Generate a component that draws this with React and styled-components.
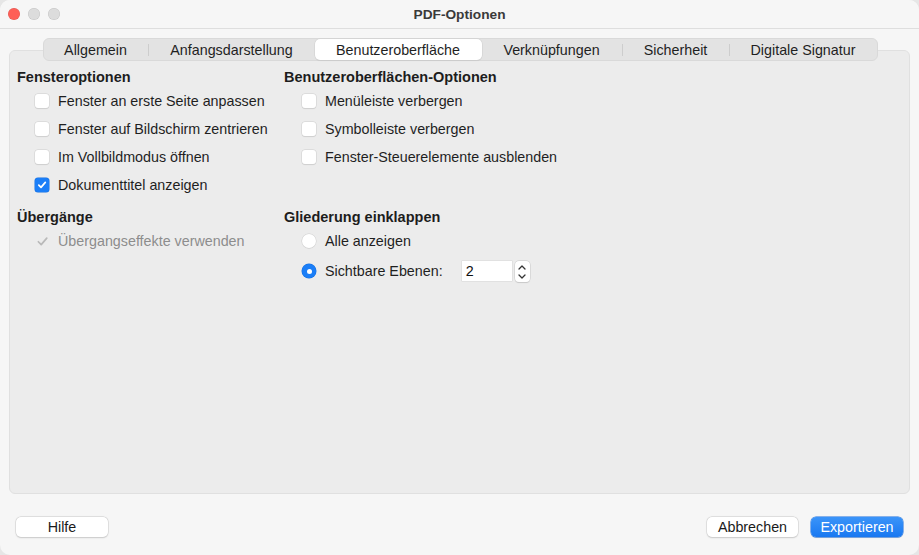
import React from "react";
import styled, { createGlobalStyle } from "styled-components";

const GlobalStyle = createGlobalStyle`
  html, body {
    margin: 0;
    padding: 0;
    background: #e6e6e6;
  }
  body {
    font-family: "Liberation Sans", Arial, Helvetica, sans-serif;
    font-size: 14.3px;
    color: #1d1d1d;
  }
`;

const Window = styled.div`
  display: flex;
  flex-direction: column;
  height: 555px;
  background: #f6f6f6;
  border-radius: 10px;
  overflow: hidden;
`;

const TitleBar = styled.div`
  position: relative;
  display: flex;
  align-items: center;
  justify-content: center;
  height: 28px;
  border-bottom: 1px solid #dedede;
  background: #f6f6f6;
  font-weight: bold;
  font-size: 13.7px;
  color: #3a3a3a;
`;

const Lights = styled.div`
  position: absolute;
  left: 8px;
  top: 8px;
  display: flex;
  gap: 8px;
`;

const Light = styled.span`
  width: 12px;
  height: 12px;
  border-radius: 50%;
  background: ${(p) => p.color};
  box-shadow: inset 0 0 0 0.5px rgba(0, 0, 0, 0.12);
`;

const Body = styled.div`
  flex: 1;
  display: flex;
  flex-direction: column;
  padding: 9px 9px 0 9px;
`;

const TabBar = styled.div`
  position: relative;
  z-index: 1;
  align-self: center;
  display: flex;
  align-items: center;
  height: 21px;
  background: #e3e3e3;
  border: 1px solid #d9d9d9;
  border-radius: 6px;
  margin-left: 1px;
`;

const Tab = styled.div`
  display: flex;
  align-items: center;
  justify-content: center;
  height: 21px;
  width: ${(p) => p.w}px;
  box-sizing: border-box;
  border-radius: 5px;
  background: ${(p) => (p.active ? "#ffffff" : "transparent")};
  box-shadow: ${(p) =>
    p.active ? "0 0 0 0.5px #cfcfcf, 0 1px 1px rgba(0,0,0,0.08)" : "none"};
  color: #1f1f1f;
  white-space: nowrap;
`;

const Sep = styled.span`
  width: 1px;
  height: 12px;
  background: ${(p) => (p.hidden ? "transparent" : "#cdcdcd")};
`;

const Panel = styled.div`
  flex: 1;
  margin-top: -11px;
  background: #ececec;
  border: 1px solid #e0e0e0;
  border-radius: 6px;
  padding: 16px 7px 0 7px;
`;

const Grid = styled.div`
  display: grid;
  grid-template-columns: 267px 1fr;
  row-gap: 8px;
`;

const Section = styled.div`
  display: flex;
  flex-direction: column;
`;

const Heading = styled.div`
  height: 20px;
  line-height: 20px;
  font-weight: bold;
  font-size: 14.5px;
`;

const Row = styled.div`
  display: flex;
  align-items: center;
  height: ${(p) => p.h || 28}px;
  padding-left: 18px;
  gap: 9px;
  color: ${(p) => (p.disabled ? "#8d8d8d" : "#1f1f1f")};
  white-space: nowrap;
`;

const Box = styled.span`
  display: flex;
  align-items: center;
  justify-content: center;
  flex: none;
  width: 14px;
  height: 14px;
  box-sizing: border-box;
  border-radius: ${(p) => (p.round ? "50%" : "3px")};
  background: ${(p) =>
    p.disabled ? "transparent" : p.checked ? "#1b7ef7" : "#ffffff"};
  box-shadow: ${(p) =>
    p.disabled
      ? "none"
      : p.checked
      ? "0 0 0 0.5px #1670e0"
      : "0 0 0 0.5px #cfcfcf, 0 0.5px 1px rgba(0,0,0,0.12)"};
`;

const Dot = styled.span`
  width: 5px;
  height: 5px;
  border-radius: 50%;
  background: #fff;
`;

const Spin = styled.div`
  display: flex;
  align-items: center;
  margin-left: 10px;
  gap: 3px;
`;

const SpinInput = styled.div`
  width: 46px;
  height: 20px;
  line-height: 20px;
  padding-left: 4px;
  background: #fff;
  box-shadow: 0 0 0 0.5px #d6d6d6;
  color: #111;
`;

const Stepper = styled.div`
  display: flex;
  flex-direction: column;
  align-items: center;
  justify-content: space-between;
  box-sizing: border-box;
  padding: 4px 0 3px;
  width: 15px;
  height: 21px;
  border-radius: 4px;
  background: #fff;
  box-shadow: 0 0 0 0.5px #c9c9c9, 0 0.5px 1px rgba(0, 0, 0, 0.15);
`;

const Footer = styled.div`
  display: flex;
  align-items: center;
  padding: 23px 16px 18px 16px;
  gap: 13px;
`;

const Spacer = styled.div`
  flex: 1;
`;

const Button = styled.div`
  display: flex;
  align-items: center;
  justify-content: center;
  width: ${(p) => p.w}px;
  height: 20px;
  border-radius: 5px;
  background: ${(p) =>
    p.primary ? "linear-gradient(#3b94f9, #1978f1)" : "#ffffff"};
  color: ${(p) => (p.primary ? "#ffffff" : "#1a1a1a")};
  box-shadow: ${(p) =>
    p.primary
      ? "0 0 0 0.5px #1a6fe0, 0 0.5px 1px rgba(0,0,0,0.15)"
      : "0 0 0 0.5px #cdcdcd, 0 0.5px 1.5px rgba(0,0,0,0.18)"};
`;

const Check = ({ color = "#fff", size = 10, weight = 1.7 }) => (
  <svg width={size} height={size} viewBox="0 0 10 10">
    <path
      d="M1.8 5.2 L4 7.4 L8.3 2.4"
      fill="none"
      stroke={color}
      strokeWidth={weight}
      strokeLinecap="round"
      strokeLinejoin="round"
    />
  </svg>
);

const Chevron = ({ up }) => (
  <svg width="8" height="5" viewBox="0 0 8 5">
    <path
      d={up ? "M1 4 L4 1 L7 4" : "M1 1 L4 4 L7 1"}
      fill="none"
      stroke="#333"
      strokeWidth="1.3"
      strokeLinecap="round"
      strokeLinejoin="round"
    />
  </svg>
);

const tabs = [
  { label: "Allgemein", w: 104 },
  { label: "Anfangsdarstellung", w: 166 },
  { label: "Benutzeroberfläche", w: 167 },
  { label: "Verknüpfungen", w: 140 },
  { label: "Sicherheit", w: 106 },
  { label: "Digitale Signatur", w: 147 },
];
const activeTab = 2;

const CheckRow = ({ label, checked, disabled }) => (
  <Row disabled={disabled}>
    <Box checked={checked} disabled={disabled}>
      {checked &&
        (disabled ? (
          <Check color="#b9b9b9" size={13} weight={1.3} />
        ) : (
          <Check />
        ))}
    </Box>
    {label}
  </Row>
);

const App = () => {
  return (
    <>
      <GlobalStyle />
      <Window>
        <TitleBar>
          <Lights>
            <Light color="#fe5f57" />
            <Light color="#dcdcdc" />
            <Light color="#dcdcdc" />
          </Lights>
          PDF-Optionen
        </TitleBar>
        <Body>
          <TabBar>
            {tabs.map((t, i) => (
              <React.Fragment key={t.label}>
                {i > 0 && (
                  <Sep hidden={i === activeTab || i === activeTab + 1} />
                )}
                <Tab active={i === activeTab} w={t.w}>
                  {t.label}
                </Tab>
              </React.Fragment>
            ))}
          </TabBar>
          <Panel>
            <Grid>
              <Section>
                <Heading>Fensteroptionen</Heading>
                <CheckRow label="Fenster an erste Seite anpassen" />
                <CheckRow label="Fenster auf Bildschirm zentrieren" />
                <CheckRow label="Im Vollbildmodus öffnen" />
                <CheckRow label="Dokumenttitel anzeigen" checked />
              </Section>
              <Section>
                <Heading>Benutzeroberflächen-Optionen</Heading>
                <CheckRow label="Menüleiste verbergen" />
                <CheckRow label="Symbolleiste verbergen" />
                <CheckRow label="Fenster-Steuerelemente ausblenden" />
              </Section>
              <Section>
                <Heading>Übergänge</Heading>
                <CheckRow label="Übergangseffekte verwenden" checked disabled />
              </Section>
              <Section>
                <Heading>Gliederung einklappen</Heading>
                <Row>
                  <Box round />
                  Alle anzeigen
                </Row>
                <Row h={32}>
                  <Box round checked>
                    <Dot />
                  </Box>
                  Sichtbare Ebenen:
                  <Spin>
                    <SpinInput>2</SpinInput>
                    <Stepper>
                      <Chevron up />
                      <Chevron />
                    </Stepper>
                  </Spin>
                </Row>
              </Section>
            </Grid>
          </Panel>
        </Body>
        <Footer>
          <Button w={92}>Hilfe</Button>
          <Spacer />
          <Button w={91}>Abbrechen</Button>
          <Button w={92} primary>
            Exportieren
          </Button>
        </Footer>
      </Window>
    </>
  );
};

export default App;
